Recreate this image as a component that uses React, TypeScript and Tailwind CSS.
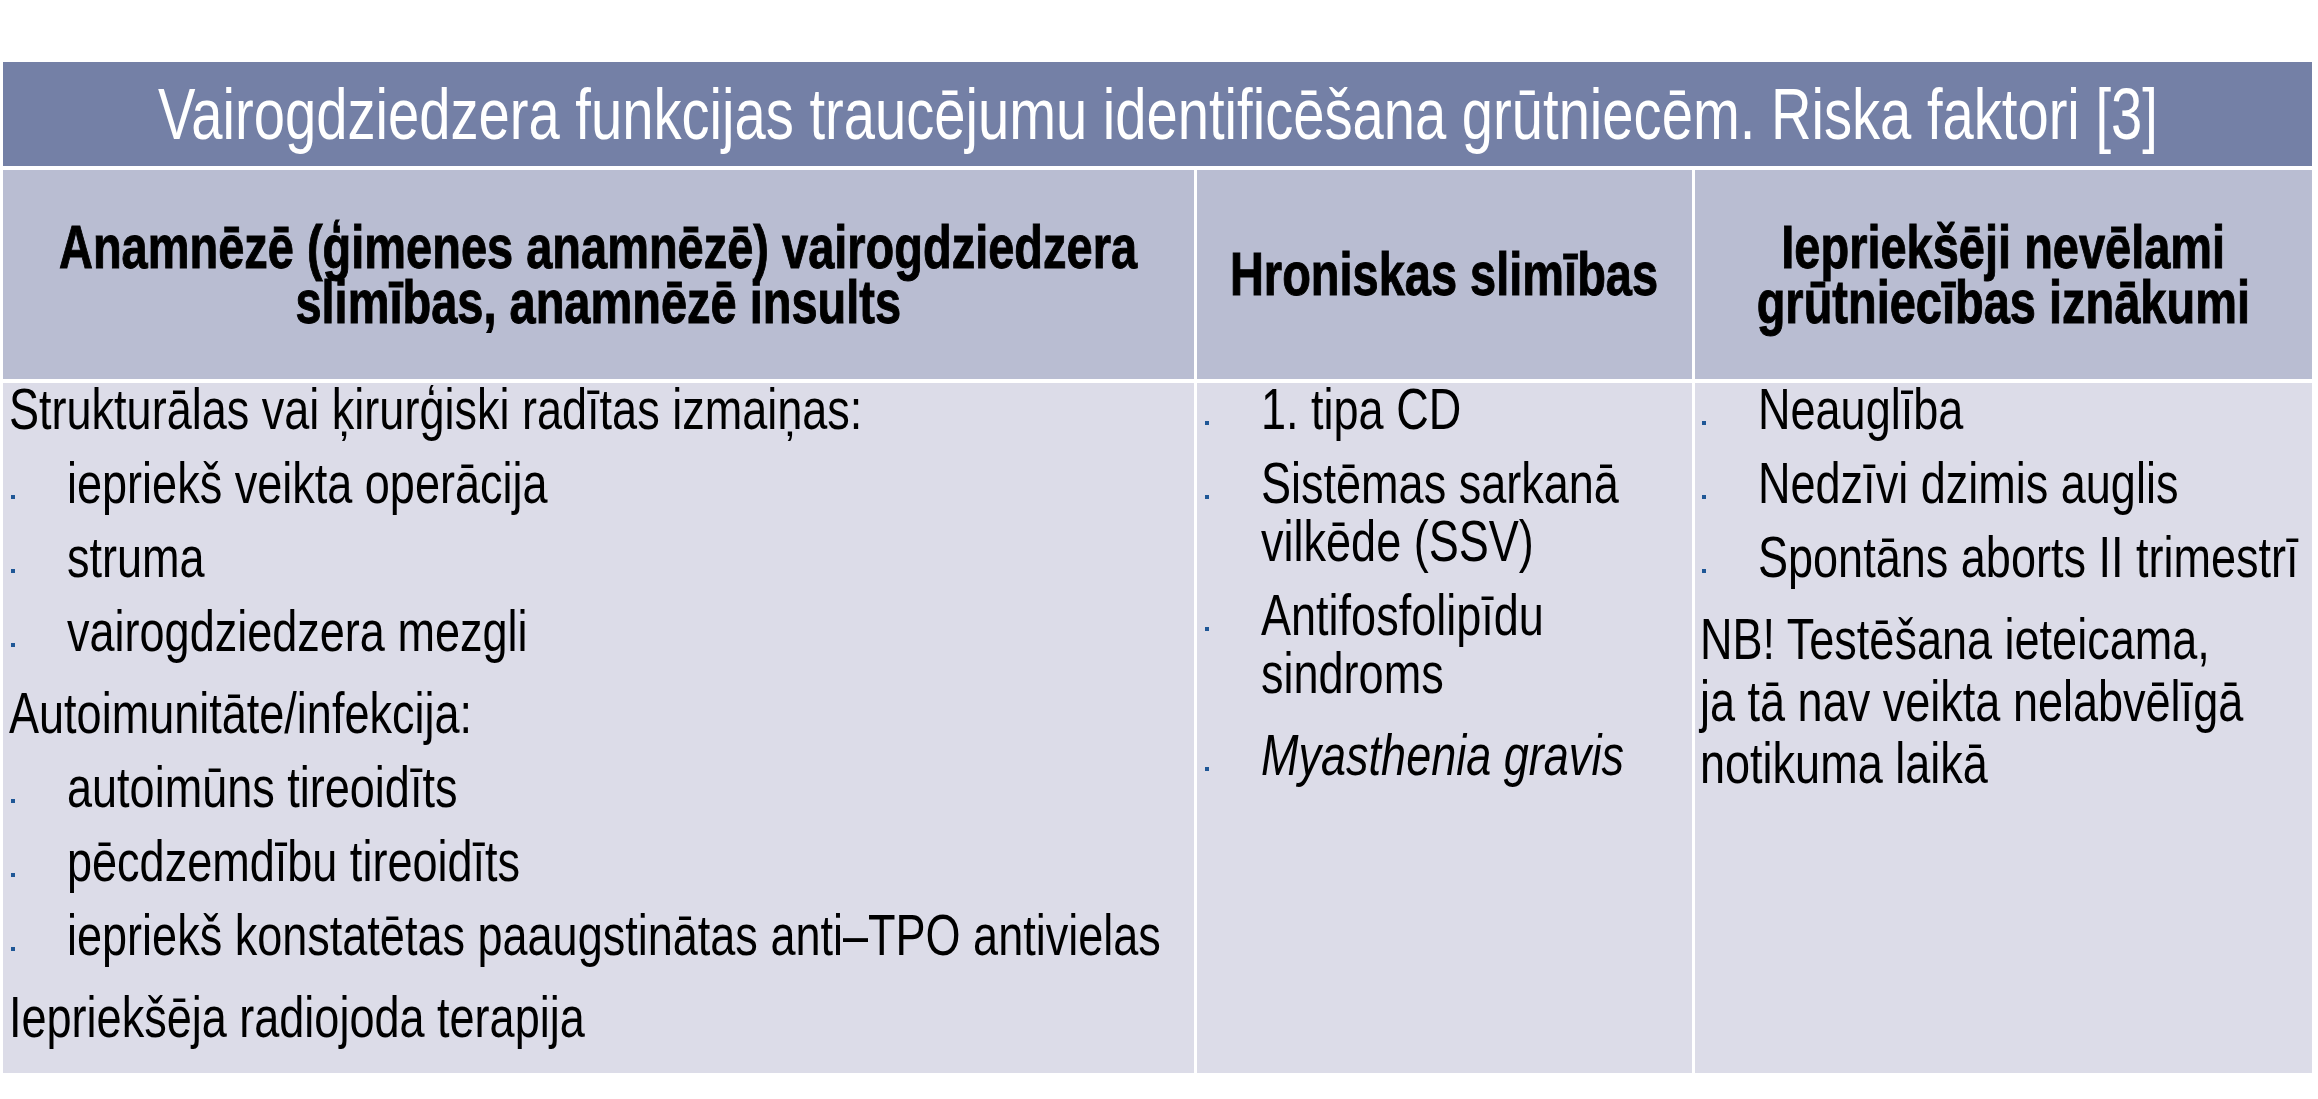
const font = { fontFamily: '"Liberation Sans", Arial, sans-serif' }

type Item = { lines: string[]; bullet?: boolean; gap?: "sm" | "lg"; italic?: boolean }

const col1: Item[] = [
  { lines: ["Strukturālas vai ķirurģiski radītas izmaiņas:"] },
  { lines: ["iepriekš veikta operācija"], bullet: true, gap: "sm" },
  { lines: ["struma"], bullet: true, gap: "sm" },
  { lines: ["vairogdziedzera mezgli"], bullet: true, gap: "sm" },
  { lines: ["Autoimunitāte/infekcija:"], gap: "lg" },
  { lines: ["autoimūns tireoidīts"], bullet: true, gap: "sm" },
  { lines: ["pēcdzemdību tireoidīts"], bullet: true, gap: "sm" },
  { lines: ["iepriekš konstatētas paaugstinātas anti–TPO antivielas"], bullet: true, gap: "sm" },
  { lines: ["Iepriekšēja radiojoda terapija"], gap: "lg" },
]

const col2: Item[] = [
  { lines: ["1. tipa CD"], bullet: true },
  { lines: ["Sistēmas sarkanā", "vilkēde (SSV)"], bullet: true, gap: "sm" },
  { lines: ["Antifosfolipīdu", "sindroms"], bullet: true, gap: "sm" },
  { lines: ["Myasthenia gravis"], bullet: true, gap: "lg", italic: true },
]

const col3: Item[] = [
  { lines: ["Neauglība"], bullet: true },
  { lines: ["Nedzīvi dzimis auglis"], bullet: true, gap: "sm" },
  { lines: ["Spontāns aborts II trimestrī"], bullet: true, gap: "sm" },
]

// teksts ir šaurināts, lai atgādinātu Arial Narrow
function Narrow({ children, className = "" }: { children: React.ReactNode; className?: string }) {
  return <span className={`block whitespace-nowrap origin-left scale-x-[0.79] ${className}`}>{children}</span>
}

function Row({ item }: { item: Item }) {
  const mt = item.gap === "lg" ? "mt-[24px]" : item.gap === "sm" ? "mt-[16px]" : ""
  const text = (
    <div className={`leading-[58px] ${item.italic ? "italic" : ""}`}>
      {item.lines.map((l) => (
        <Narrow key={l}>{l}</Narrow>
      ))}
    </div>
  )
  if (!item.bullet) return <div className={mt}>{text}</div>
  return (
    <div className={`${mt} flex`}>
      <div className="w-[58px] shrink-0 pl-[2px]">
        <span className="mt-[41px] block h-[4px] w-[4px] bg-[#1f5796]" />
      </div>
      {text}
    </div>
  )
}

function HeaderCell({ lines }: { lines: string[] }) {
  return (
    <div className="flex h-[209px] flex-col items-center justify-center bg-[#b9bdd2] text-center text-[61px] font-bold leading-[55px] text-black [-webkit-text-stroke:1px_black]">
      {lines.map((l) => (
        <span key={l} className="block whitespace-nowrap scale-x-[0.77]">
          {l}
        </span>
      ))}
    </div>
  )
}

export default function App() {
  return (
    <div className="h-[1099px] w-[2318px] overflow-hidden bg-white pl-[3px] pt-[62px]" style={font}>
      <div className="w-[2309px]">
        <div className="flex h-[104px] items-center justify-center bg-[#7480a6] text-[72px] leading-[72px] text-white">
          <span className="block whitespace-nowrap scale-x-[0.78]">
            Vairogdziedzera funkcijas traucējumu identificēšana grūtniecēm. Riska faktori [3]
          </span>
        </div>
        <div className="mt-[4px] grid grid-cols-[1191px_495px_617px] gap-x-[3px] gap-y-[4px]">
          <HeaderCell lines={["Anamnēzē (ģimenes anamnēzē) vairogdziedzera", "slimības, anamnēzē insults"]} />
          <HeaderCell lines={["Hroniskas slimības"]} />
          <HeaderCell lines={["Iepriekšēji nevēlami", "grūtniecības iznākumi"]} />

          <div className="h-[690px] bg-[#dcdce8] pl-[6px] text-[57px] text-black">
            <div className="-mt-[3px]">
              {col1.map((it, i) => (
                <Row key={i} item={it} />
              ))}
            </div>
          </div>
          <div className="h-[690px] bg-[#dcdce8] pl-[6px] text-[57px] text-black">
            <div className="-mt-[3px]">
              {col2.map((it, i) => (
                <Row key={i} item={it} />
              ))}
            </div>
          </div>
          <div className="h-[690px] bg-[#dcdce8] pl-[5px] text-[57px] text-black">
            <div className="-mt-[3px]">
              {col3.map((it, i) => (
                <Row key={i} item={it} />
              ))}
              <div className="mt-[22px] leading-[62px]">
                <Narrow>NB! Testēšana ieteicama,</Narrow>
                <Narrow>ja tā nav veikta nelabvēlīgā</Narrow>
                <Narrow>notikuma laikā</Narrow>
              </div>
            </div>
          </div>
        </div>
      </div>
    </div>
  )
}
